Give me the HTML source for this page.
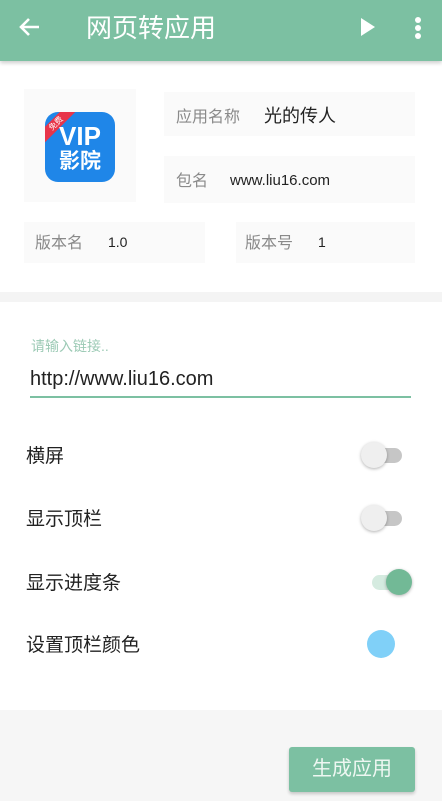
<!DOCTYPE html><html><head><meta charset="utf-8"><style>
*{margin:0;padding:0;box-sizing:border-box}
body{width:442px;height:801px;background:#fff;font-family:"Liberation Sans","Noto Sans CJK SC",sans-serif;position:relative;overflow:hidden;line-height:1}
.a{position:absolute}
.f{background:#fafafa}
.lbl{color:#8a8a8a;font-size:16px}
.t{color:#222;font-size:19px}
</style></head><body>
<div class="a" style="left:0;top:0;width:442px;height:61px;background:#7cc0a2;box-shadow:0 2px 4px rgba(0,0,0,.2)"></div>
<svg class="a" style="left:18px;top:15px" width="24" height="24" viewBox="0 0 24 24"><path d="M21 12H4M11 4l-8 8 8 8" stroke="#fff" stroke-width="2.6" fill="none"/></svg>
<div class="a" style="left:86px;top:15px;font-size:26px;color:#fff">网页转应用</div>
<svg class="a" style="left:360px;top:17px" width="16" height="20"><path d="M1 1L15 10 1 19Z" fill="#fff"/></svg>
<div class="a" style="left:415px;top:17px;width:6px;height:6px;border-radius:3px;background:#fff;box-shadow:0 8px 0 #fff,0 16px 0 #fff"></div>

<div class="a f" style="left:24px;top:89px;width:112px;height:113px"></div>
<div class="a" style="left:45px;top:112px;width:70px;height:70px;border-radius:13px;background:#1f86e8;overflow:hidden">
<div class="a" style="left:-14px;top:6px;width:50px;height:11px;background:#e8354a;transform:rotate(-45deg);color:#fff;font-size:8px;text-align:center;line-height:11px">免费</div>
<div class="a" style="left:0;top:11px;width:70px;text-align:center;color:#fff;font-size:26px;font-weight:bold">VIP</div>
<div class="a" style="left:0;top:39px;width:70px;text-align:center;color:#fff;font-size:21px;font-weight:bold">影院</div></div>
<div class="a f" style="left:164px;top:92px;width:251px;height:44px"></div>
<div class="a lbl" style="left:176px;top:110px">应用名称</div>
<div class="a" style="left:264px;top:107px;font-size:18px;color:#222">光的传人</div>
<div class="a f" style="left:164px;top:156px;width:251px;height:47px"></div>
<div class="a lbl" style="left:176px;top:174px">包名</div>
<div class="a" style="left:230px;top:173px;font-size:15px;color:#222">www.liu16.com</div>
<div class="a f" style="left:24px;top:222px;width:181px;height:41px"></div>
<div class="a lbl" style="left:35px;top:236px">版本名</div>
<div class="a" style="left:108px;top:235px;font-size:14px;color:#222">1.0</div>
<div class="a f" style="left:236px;top:222px;width:179px;height:41px"></div>
<div class="a lbl" style="left:245px;top:236px">版本号</div>
<div class="a" style="left:318px;top:235px;font-size:14px;color:#222">1</div>

<div class="a" style="left:0;top:292px;width:442px;height:10px;background:#f4f4f4"></div>
<div class="a" style="left:31px;top:339px;font-size:14px;color:#9ccab5">请输入链接..</div>
<div class="a" style="left:30px;top:369px;font-size:20px;color:#222">http://www.liu16.com</div>
<div class="a" style="left:30px;top:396px;width:381px;height:2px;background:#7cc0a2"></div>

<div class="a t" style="left:26px;top:447px">横屏</div>
<div class="a t" style="left:26px;top:510px">显示顶栏</div>
<div class="a t" style="left:26px;top:574px">显示进度条</div>
<div class="a t" style="left:26px;top:636px">设置顶栏颜色</div>

<div class="a" style="left:366px;top:448px;width:36px;height:15px;border-radius:8px;background:#c6c6c6"></div>
<div class="a" style="left:361px;top:442px;width:26px;height:26px;border-radius:13px;background:#efefef;box-shadow:0 1px 3px rgba(0,0,0,.3)"></div>
<div class="a" style="left:366px;top:511px;width:36px;height:15px;border-radius:8px;background:#c6c6c6"></div>
<div class="a" style="left:361px;top:505px;width:26px;height:26px;border-radius:13px;background:#efefef;box-shadow:0 1px 3px rgba(0,0,0,.3)"></div>
<div class="a" style="left:372px;top:575px;width:36px;height:15px;border-radius:8px;background:#d5ebe0"></div>
<div class="a" style="left:386px;top:569px;width:26px;height:26px;border-radius:13px;background:#72b996;box-shadow:0 1px 3px rgba(0,0,0,.3)"></div>
<div class="a" style="left:367px;top:630px;width:28px;height:28px;border-radius:14px;background:#80d0f8"></div>

<div class="a" style="left:0;top:710px;width:442px;height:91px;background:#f6f6f6"></div>
<div class="a" style="left:289px;top:747px;width:126px;height:45px;border-radius:3px;background:#7cc0a2;box-shadow:0 2px 3px rgba(0,0,0,.2);color:#eef7f2;font-size:20px;text-align:center;line-height:45px">生成应用</div>
</body></html>
